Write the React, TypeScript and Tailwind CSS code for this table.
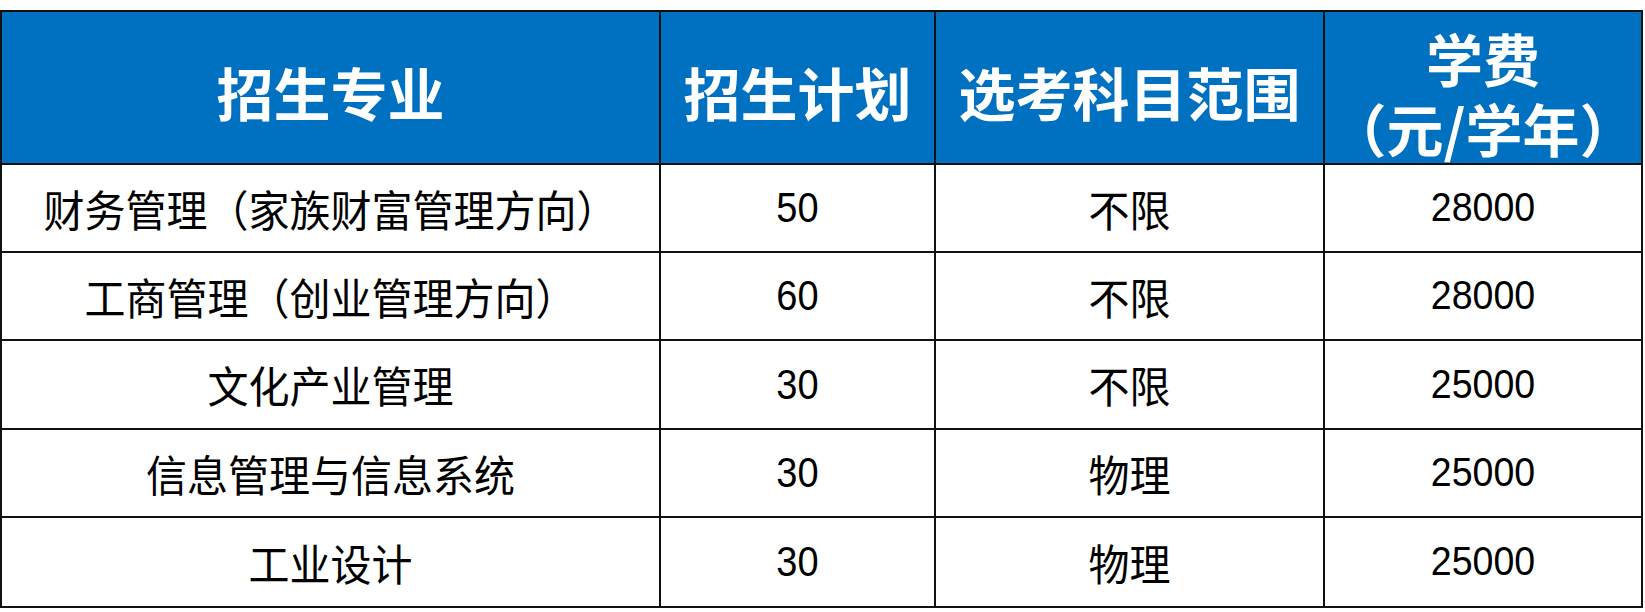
import React from "react";

const rows = [
  { name: "财务管理（家族财富管理方向）", plan: "50", scope: "不限", fee: "28000", h: "h-[88px]" },
  { name: "工商管理（创业管理方向）", plan: "60", scope: "不限", fee: "28000", h: "h-[88px]" },
  { name: "文化产业管理", plan: "30", scope: "不限", fee: "25000", h: "h-[89px]" },
  { name: "信息管理与信息系统", plan: "30", scope: "物理", fee: "25000", h: "h-[88px]" },
  { name: "工业设计", plan: "30", scope: "物理", fee: "25000", h: "h-[90px]" },
];

const cjk = "font-['Noto_Sans_CJK_SC',sans-serif]";
const num = "font-['Liberation_Sans','Noto_Sans_CJK_SC',sans-serif]";

export default function App() {
  return (
    <div className="w-[1645px] h-[612px] bg-white pt-[10px]">
      <div className="w-[1643px] border-l-2 border-t-2 border-[#111]">
        {/* header */}
        <div className="grid grid-cols-[659px_275px_389px_318px] h-[153px] bg-[#0070C0] text-white font-bold">
          <div className={`flex items-center justify-center pt-[8px] border-r-2 border-b-2 border-[#111] text-[57px] leading-none ${cjk}`}>
            招生专业
          </div>
          <div className={`flex items-center justify-center pt-[8px] border-r-2 border-b-2 border-[#111] text-[57px] leading-none whitespace-nowrap ${cjk}`}>
            招生计划
          </div>
          <div className={`flex items-center justify-center pt-[8px] border-r-2 border-b-2 border-[#111] text-[57px] leading-none whitespace-nowrap ${cjk}`}>
            选考科目范围
          </div>
          <div className={`flex items-center justify-center pt-[8px] border-r-2 border-b-2 border-[#111] ${cjk}`}>
            <p className="text-center text-[57px] leading-[70px] whitespace-pre">{"学费\n（元/学年）"}</p>
          </div>
        </div>
        {rows.map((r, i) => (
          <div
            key={i}
            className={`grid grid-cols-[659px_275px_389px_318px] ${r.h} text-black`}
          >
            <div className={`flex items-center justify-center border-r-2 border-b-2 border-[#111] text-[41px] leading-none whitespace-nowrap ${cjk}`}>
              <span className="inline-block scale-y-[1.05]">{r.name}</span>
            </div>
            <div className={`flex items-center justify-center border-r-2 border-b-2 border-[#111] text-[38px] leading-none ${num}`}>
              <span className="inline-block scale-y-[1.1]">{r.plan}</span>
            </div>
            <div className={`flex items-center justify-center border-r-2 border-b-2 border-[#111] text-[41px] leading-none ${cjk}`}>
              <span className="inline-block scale-y-[1.05]">{r.scope}</span>
            </div>
            <div className={`flex items-center justify-center border-r-2 border-b-2 border-[#111] text-[37.5px] leading-none ${num}`}>
              <span className="inline-block scale-y-[1.1]">{r.fee}</span>
            </div>
          </div>
        ))}
      </div>
    </div>
  );
}
